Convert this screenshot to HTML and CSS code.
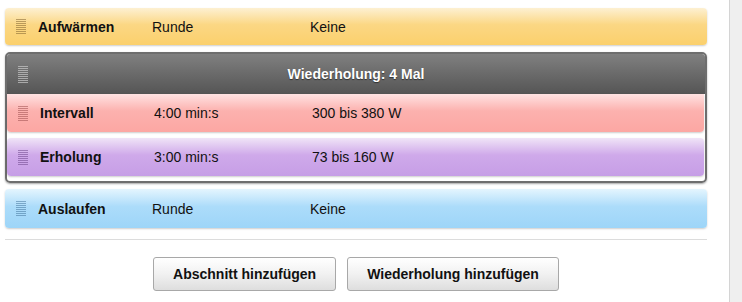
FILE: index.html
```html
<!DOCTYPE html>
<html>
<head>
  <title>Trainingsplan</title>
  <link rel="stylesheet" href="styles.css">
</head>
<body>
  <div class="main">
    <div class="bar warmup">
      <span class="handle"></span>
      <span class="col-name">Aufwärmen</span>
      <span class="col-dur">Runde</span>
      <span class="col-target">Keine</span>
    </div>

    <!-- Wiederholungsblock -->
    <div class="repeat">
      <div class="repeat-head">
        <span class="handle"></span>
        <span class="repeat-title">Wiederholung: 4 Mal</span>
      </div>
      <div class="bar interval">
        <span class="handle"></span>
        <span class="col-name">Intervall</span>
        <span class="col-dur">4:00 min:s</span>
        <span class="col-target">300 bis 380 W</span>
      </div>
      <div class="bar recovery">
        <span class="handle"></span>
        <span class="col-name">Erholung</span>
        <span class="col-dur">3:00 min:s</span>
        <span class="col-target">73 bis 160 W</span>
      </div>
    </div>

    <div class="bar cooldown">
      <span class="handle"></span>
      <span class="col-name">Auslaufen</span>
      <span class="col-dur">Runde</span>
      <span class="col-target">Keine</span>
    </div>

    <div class="actions">
      <button class="btn">Abschnitt hinzufügen</button>
      <button class="btn">Wiederholung hinzufügen</button>
    </div>
  </div>
  <div class="side"></div>
</body>
</html>
```

FILE: styles.css
```css
body {
  margin: 0;
  font-family: "Liberation Sans", Arial, sans-serif;
  font-size: 14px;
  color: #111;
  background: #fff;
  display: flex;
  height: 302px;
  overflow: hidden;
}
.main {
  width: 702px;
  padding: 8px 0 0 5px;
}
.side {
  margin-left: 22px;
  flex: 1;
  border-left: 1px solid #d4d4d4;
  background: #efefef;
}
.bar {
  display: flex;
  align-items: center;
  height: 37px;
  border-radius: 4px;
  box-shadow: 0 1px 2px rgba(0, 0, 0, 0.2);
}
.handle {
  width: 10px;
  height: 15px;
  margin-left: 11px;
  margin-right: 12px;
  background: repeating-linear-gradient(to bottom, rgba(120, 90, 40, 0.5) 0 1px, transparent 1px 2px);
}
.col-name {
  width: 114px;
  font-weight: bold;
}
.col-dur {
  width: 158px;
}
.warmup {
  background: linear-gradient(to bottom, #fdf0d2 0%, #fbd784 45%, #fbd06c 100%);
}
.cooldown {
  margin-top: 6px;
  height: 39px;
  background: linear-gradient(to bottom, #e4f5fe 0%, #acdcfa 45%, #9dd5f8 100%);
}
.cooldown .handle {
  background: repeating-linear-gradient(to bottom, rgba(60, 110, 150, 0.5) 0 1px, transparent 1px 2px);
}
.interval {
  background: linear-gradient(to bottom, #ffe2e2 0%, #fcb1ae 45%, #fca7a3 100%);
}
.interval .handle {
  background: repeating-linear-gradient(to bottom, rgba(150, 70, 70, 0.5) 0 1px, transparent 1px 2px);
}
.recovery {
  margin-top: 6px;
  background: linear-gradient(to bottom, #f0e4f7 0%, #cfa9ea 45%, #c69ee6 100%);
}
.recovery .handle {
  background: repeating-linear-gradient(to bottom, rgba(100, 60, 130, 0.5) 0 1px, transparent 1px 2px);
}

/* Wiederholung */
.repeat {
  margin-top: 7px;
  border: 2px solid #6e6e6e;
  border-radius: 5px;
  padding: 0 1px 5px 0;
  box-shadow: 0 1px 2px rgba(0, 0, 0, 0.35);
}
.repeat-head {
  display: flex;
  align-items: center;
  height: 40px;
  background: linear-gradient(to bottom, #808080 0%, #6a6a6a 50%, #555 100%);
  border-radius: 3px 3px 0 0;
  margin-right: -1px;
}
.repeat-head .handle {
  height: 17px;
  background: repeating-linear-gradient(to bottom, rgba(200, 200, 200, 0.7) 0 1px, transparent 1px 2px);
}
.repeat-title {
  flex: 1;
  text-align: center;
  color: #fff;
  font-weight: bold;
  padding-right: 33px;
  text-shadow: 0 1px 1px rgba(0, 0, 0, 0.5);
}
.repeat .bar {
  height: 38px;
  border-radius: 0 0 4px 4px;
}
.repeat .recovery {
  border-radius: 4px;
}

.actions {
  margin-top: 11px;
  border-top: 1px solid #dcdcdc;
  padding-top: 17px;
  display: flex;
  justify-content: center;
  gap: 11px;
}
.btn {
  font-family: "Liberation Sans", Arial, sans-serif;
  font-size: 14px;
  font-weight: bold;
  color: #111;
  height: 34px;
  padding: 0 19px;
  border: 1px solid #a8a8a8;
  border-radius: 3px;
  background: linear-gradient(to bottom, #ffffff 0%, #f1f1f1 50%, #dedede 100%);
}
```
